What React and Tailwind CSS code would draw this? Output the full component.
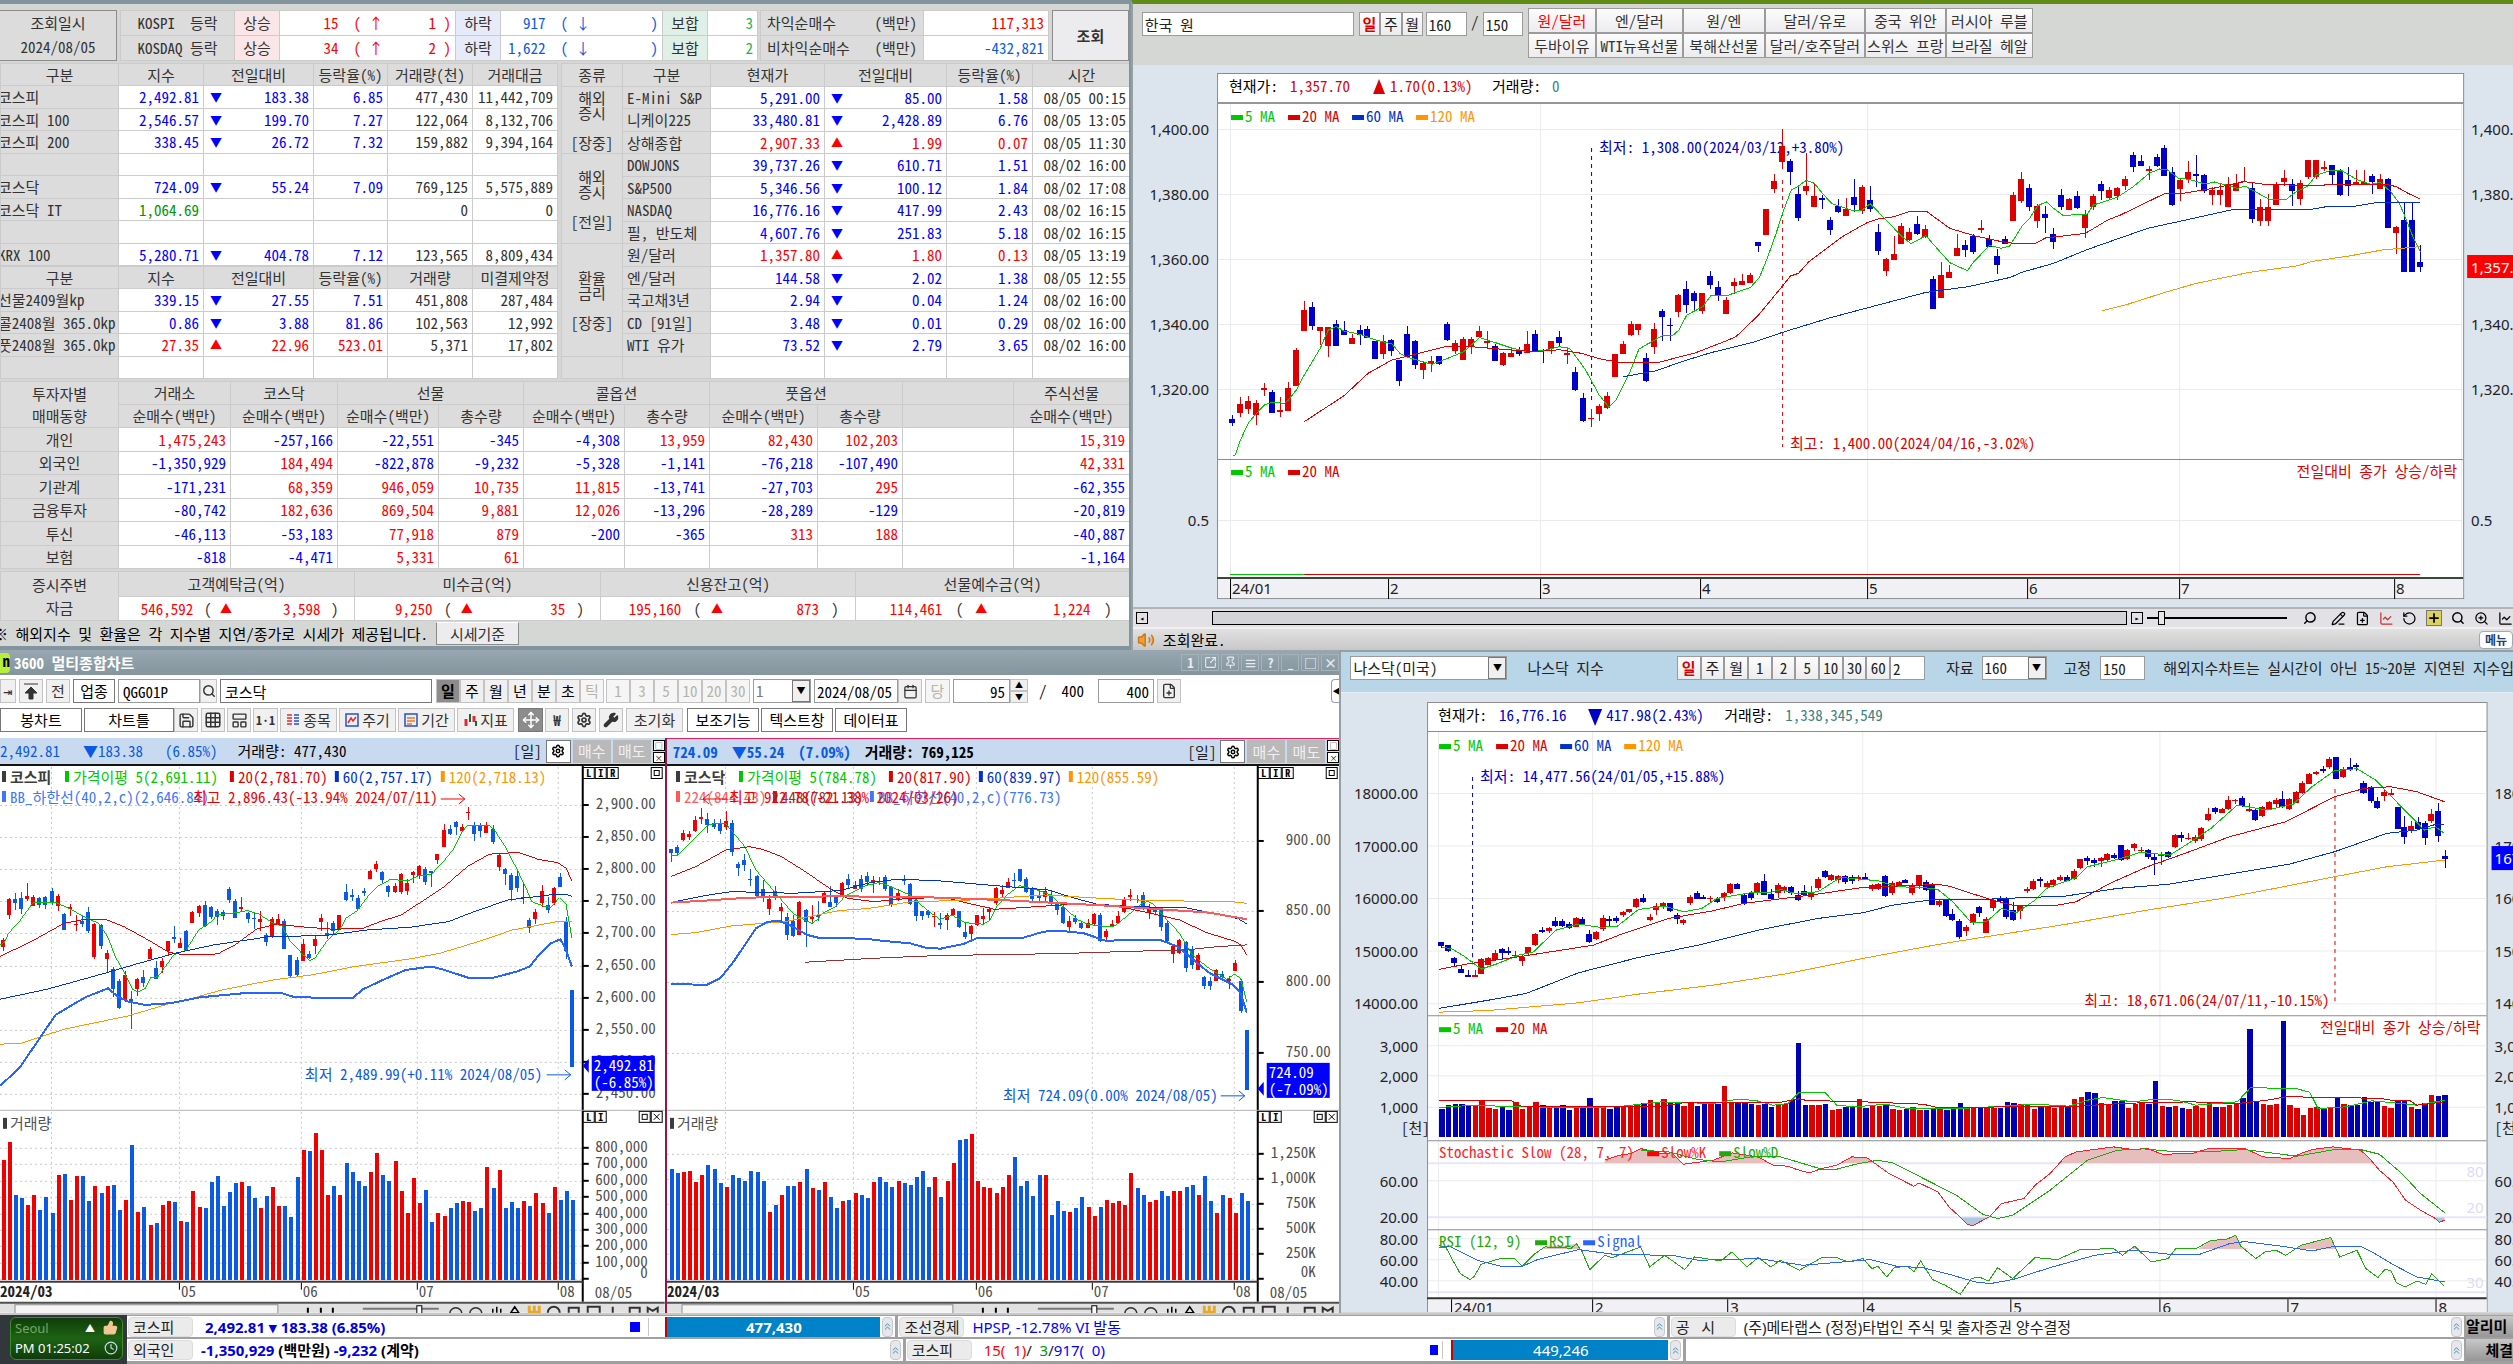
import {
  Search, Settings, Wrench, Move, Save, Grid3x3, LayoutPanelTop, Calendar, Volume2, ThumbsUp, Clock,
  ChevronsUp, FilePlus, PencilLine, RotateCcw, Plus, ChartLine, ZoomIn, Pin, SquareArrowOutUpRight,
} from 'lucide-react';

const RED = '#ff0000', BLUE = '#0000ff', GREEN = '#009600';
const MA = { g: '#00c800', r: '#dc0000', b: '#0032c8', o: '#ff9600' };

const indexRows = [
  ['코스피', '2,492.81', '▼', '183.38', '6.85', '477,430', '11,442,709'],
  ['코스피 100', '2,546.57', '▼', '199.70', '7.27', '122,064', '8,132,706'],
  ['코스피 200', '338.45', '▼', '26.72', '7.32', '159,882', '9,394,164'],
  [],
  ['코스닥', '724.09', '▼', '55.24', '7.09', '769,125', '5,575,889'],
  ['코스닥 IT', '1,064.69', '', '', '', '0', '0'],
  [],
  ['KRX 100', '5,280.71', '▼', '404.78', '7.12', '123,565', '8,809,434'],
];

const futureRows = [
  ['선물2409월kp', '339.15', '▼', '27.55', '7.51', '451,808', '287,484'],
  ['콜2408월 365.0kp', '0.86', '▼', '3.88', '81.86', '102,563', '12,992'],
  ['풋2408월 365.0kp', '27.35', '▲', '22.96', '523.01', '5,371', '17,802'],
  [],
];

const worldRows = [
  ['E-Mini S&P', '5,291.00', '▼', '85.00', '1.58', '08/05 00:15', '해외\n증시\n\n[장중]', 3],
  ['니케이225', '33,480.81', '▼', '2,428.89', '6.76', '08/05 13:05'],
  ['상해종합', '2,907.33', '▲', '1.99', '0.07', '08/05 11:30'],
  ['DOWJONS', '39,737.26', '▼', '610.71', '1.51', '08/02 16:00', '해외\n증시\n\n[전일]', 4],
  ['S&P500', '5,346.56', '▼', '100.12', '1.84', '08/02 17:08'],
  ['NASDAQ', '16,776.16', '▼', '417.99', '2.43', '08/02 16:15'],
  ['필, 반도체', '4,607.76', '▼', '251.83', '5.18', '08/02 16:15'],
  ['원/달러', '1,357.80', '▲', '1.80', '0.13', '08/05 13:19', '환율\n금리\n\n[장중]', 5],
  ['엔/달러', '144.58', '▼', '2.02', '1.38', '08/05 12:55'],
  ['국고채3년', '2.94', '▼', '0.04', '1.24', '08/02 16:00'],
  ['CD [91일]', '3.48', '▼', '0.01', '0.29', '08/02 16:00'],
  ['WTI 유가', '73.52', '▼', '2.79', '3.65', '08/02 16:00'],
  ['', '', '', '', '', '', ' ', 1],
];

const investorRows = [
  ['개인', '1,475,243', '-257,166', '-22,551', '-345', '-4,308', '13,959', '82,430', '102,203', '', '15,319'],
  ['외국인', '-1,350,929', '184,494', '-822,878', '-9,232', '-5,328', '-1,141', '-76,218', '-107,490', '', '42,331'],
  ['기관계', '-171,231', '68,359', '946,059', '10,735', '11,815', '-13,741', '-27,703', '295', '', '-62,355'],
  ['금융투자', '-80,742', '182,636', '869,504', '9,881', '12,026', '-13,296', '-28,289', '-129', '', '-20,819'],
  ['투신', '-46,113', '-53,183', '77,918', '879', '-200', '-365', '313', '188', '', '-40,887'],
  ['보험', '-818', '-4,471', '5,331', '61', '', '', '', '', '', '-1,164'],
];

const funds = [
  ['고객예탁금(억)', '546,592', '3,598'],
  ['미수금(억)', '9,250', '35'],
  ['신용잔고(억)', '195,160', '873'],
  ['선물예수금(억)', '114,461', '1,224'],
];

// Bars: direction, high, body top, body bottom, low. Heights are in thirds of a pixel.
const wonBars = `B 1245 1257 1268 1277,R 1192 1212 1238 1250,R 1189 1203 1227 1241,R 1200 1208 1244 1274,R 1148 1164 1169 1188,B 1170 1175 1238 1238,R 1190 1231 1236 1251,R 1145 1163 1233 1233,R 1043 1050 1158 1158,R 904 930 993 993,
B 907 922 978 990,R 980 980 993 1035,R 980 982 1038 1072,B 961 971 1038 1038,B 964 990 1004 1006,R 1003 1013 1031 1031,B 976 990 1006 1034,B 979 987 1014 1014,B 1022 1022 1076 1078,R 1006 1022 1061 1076,
B 1017 1020 1052 1068,B 1080 1080 1143 1158,B 979 1001 1070 1070,B 1020 1023 1094 1108,R 1086 1089 1109 1138,R 1068 1084 1091 1117,B 1068 1069 1091 1094,B 967 971 1019 1022,R 1020 1028 1052 1063,R 1012 1018 1079 1079,
R 1010 1018 1040 1061,R 979 993 1011 1011,R 993 1023 1030 1044,B 1031 1039 1083 1083,R 1055 1060 1095 1098,R 1041 1059 1072 1072,B 1042 1053 1061 1068,R 994 1032 1060 1060,B 991 1001 1054 1054,B 1046 1051 1054 1090,
R 1023 1024 1046 1061,B 994 1012 1028 1038,R 1048 1059 1064 1093,B 1100 1117 1170 1172,B 1178 1195 1264 1267,R 1228 1253 1256 1280,R 1212 1218 1241 1263,R 1175 1188 1225 1228,R 1062 1062 1130 1130,R 1024 1032 1061 1061,
R 964 971 1004 1008,R 972 972 989 1006,B 1059 1073 1143 1147,R 968 986 1040 1063,B 926 933 952 1022,B 954 974 978 1022,R 882 885 937 951,B 844 866 914 940,B 872 878 904 929,R 878 878 932 943,
B 814 828 854 868,B 844 862 886 902,R 890 900 941 941,R 834 847 857 882,R 823 844 854 854,R 818 825 848 848,B 727 727 738 756,R 626 626 705 705,R 522 544 566 580,R 386 438 487 508,
B 478 484 517 554,B 562 582 653 662,R 458 558 573 584,R 552 589 622 622,B 585 594 599 626,B 652 659 689 704,B 596 618 635 638,R 594 627 648 648,B 536 591 614 636,R 556 562 632 642,
B 558 601 626 636,B 672 697 753 764,R 775 777 812 829,R 708 762 779 779,R 668 679 731 731,R 684 697 719 724,B 649 671 702 705,R 676 686 710 714,B 828 836 926 926,R 787 825 895 895,
R 796 817 835 835,R 701 743 768 768,B 721 735 749 771,B 702 708 757 761,R 660 683 689 699,B 704 716 741 741,B 747 769 794 821,B 709 716 731 731,R 577 585 663 663,R 517 537 603 609,
B 551 563 621 633,R 611 619 663 685,B 619 641 654 700,B 683 702 727 746,B 567 585 621 629,R 594 597 629 629,B 574 589 625 627,R 630 642 683 715,R 582 589 621 629,B 544 552 573 600,
R 560 570 593 597,R 560 563 587 600,R 529 537 557 570,B 455 466 502 517,B 466 484 497 497,R 499 507 513 539,B 463 470 497 500,B 435 443 528 528,B 500 516 614 617,R 534 540 566 602,
R 484 515 538 549,B 464 521 528 560,B 521 525 573 580,R 560 570 585 614,R 552 570 585 615,R 532 552 622 622,R 521 548 573 573,R 502 544 547 547,B 549 563 656 668,R 596 622 663 677,
R 582 622 663 677,R 547 552 614 614,R 510 533 546 557,B 536 551 573 618,R 540 548 597 614,R 480 480 532 536,R 480 480 532 536,R 484 502 506 514,B 495 496 524 553,B 507 510 585 587,
B 502 540 557 588,R 510 545 551 555,R 510 545 551 555,B 521 528 546 581,R 521 537 566 566,B 535 537 683 683,R 679 681 700 762,B 610 660 817 817,B 606 660 817 817,B 735 785 801 817`;

const wonLines = [
  [MA.g, '0 1367,.3 1367,1 1320,2 1268,3 1240,4 1215,5 1206,6.5 1210,7 1200,8 1170,9 1125,11 1045,12 990,13 980,14 993,16 1003,18 1020,20 1032,21 1060,22 1072,24 1086,25 1093,27 1075,29 1055,31 1013,33 1028,35 1044,37 1055,39 1052,41 1040,42.3 1045,43 1067,44.3 1110,46 1185,47.2 1221,48.1 1200,49.7 1125,51 1047,52 1033,54 1006,55.2 1007,56 990,57 945,59 920,60 887,62.2 886,63 878,65 862,66.1 832,67 780,68.2 700,69 640,70.1 570,71 558,72 541,73 550,74 580,75.2 611,77.9 632,79 630,80 611,82 660,84 710,85.1 731,87 707,88 735,90 788,92.2 812,93 785,95 736,96.4 745,97.5 738,99 680,100 655,101 618,102.1 605,103 625,104.2 646,107.2 643,108 615,110 600,111 592,113 560,115 520,116.3 507,117.3 510,118.7 535,120 538,122 552,123.2 546,126.1 565,127 558,130 597,132.2 598,133.3 578,134.8 560,136 525,138 510,139.2 512,141 538,142.8 553,144 547,145.3 575,146.4 610,147.1 650,148 705,149 755'],
  [MA.r, '9 1265,14 1187,17 1120,20 1080,23 1062,27 1038,30 1040,35 1050,38 1055,41 1049,43.8 1060,46 1076,48.5 1087,53.6 1086,58 1059,62 1022,63.2 1009,66 945,69 858,70 828,71 820,72.3 785,75 737,76.5 710,79.6 668,81 657,83 650,85.1 633,87 633,90 685,93.2 708,96.5 725,98 730,100.7 730,102 714,107 700,109.8 660,111.4 645,114 615,117 580,119.2 580,123 565,127 545,129.2 552,134.8 557,139.2 553,144.8 553,146 560,147.5 580,149 597'],
  [MA.b, '49 1130,53 1113,57 1080,60 1058,65.3 1027,69 997,75 953,79.9 922,87 877,92.3 860,97.6 832,99 817,103 790,107.3 748,114.8 685,119.2 662,125.6 628,134.8 630,137 621,141 618,143.9 606,149 606'],
  [MA.o, '109.1 932,112 915,117 877,120.9 850,127.6 817,133.7 797,135.3 785,140.3 767,144.2 750,149 740'],
];

const kospiBars = `R 893 900 922 932,R 773 777 824 836,B 758 776 789 810,B 756 773 808 822,R 728 768 776 784,R 764 772 798 798,B 770 774 795 804,B 768 770 795 806,B 745 754 789 795,R 762 768 798 813,
B 820 822 869 869,R 792 801 808 828,R 824 851 854 872,B 828 842 853 862,B 802 816 874 880,R 848 852 950 956,B 852 856 918 926,R 930 938 958 998,B 980 986 1048 1072,B 1018 1024 1104 1106,
R 992 1006 1080 1085,B 1054 1076 1090 1166,R 1014 1016 1046 1068,B 990 1010 1030 1040,R 922 927 956 956,B 964 984 1018 1018,R 954 962 982 998,R 902 904 934 946,B 859 892 898 910,R 894 908 923 923,
B 870 872 930 930,R 814 816 848 850,R 794 797 819 832,B 784 795 857 860,B 797 802 831 837,B 806 812 832 856,B 810 815 827 840,B 740 747 780 789,B 778 782 835 835,R 772 800 806 816,
B 816 818 836 848,B 818 834 838 868,R 814 836 846 874,B 880 884 906 918,R 832 838 890 893,R 822 836 853 853,B 836 842 926 926,B 944 946 1008 1012,B 950 960 1006 1008,R 898 912 964 964,
B 932 942 954 958,R 886 898 918 942,R 822 833 845 872,B 846 878 888 898,B 842 848 873 882,R 824 826 868 870,B 732 756 780 782,B 748 766 770 782,B 766 775 806 808,B 743 754 760 768,
R 690 692 716 716,R 664 672 688 696,B 694 696 719 732,B 734 738 756 772,R 728 738 756 758,R 700 702 756 762,R 718 728 753 764,R 692 696 706 728,R 676 677 708 718,B 680 686 726 734,
B 692 694 700 740,R 642 642 660 672,R 552 570 622 622,B 556 566 582 586,B 544 546 560 586,R 552 560 572 576,R 500 516 519 540,B 546 556 582 602,B 550 558 572 592,R 546 558 578 578,
B 556 568 606 612,R 643 644 682 692,B 684 686 702 734,B 700 704 751 782,B 694 708 744 756,R 732 770 774 792,B 834 840 864 878,R 808 817 838 852,R 734 753 790 800,B 770 795 810 820,
R 742 744 790 795,B 700 712 740 742,B 832 847 932 958,B 1050 1050 1282 1282`;

const kospiLines = [
  [MA.g, '0 915,10 908,20 880,45 845,78 787,130 787,160 805,205 835,230 850,252 890,270 950,292 1000,310 1048,322 1056,340 1046,352 1014,370 1010,407 945,436 930,465 870,495 845,509 824,545 820,580 812,605 822,640 850,660 858,680 905,710 945,725 962,737 955,767 900,796 868,810 835,836 812,866 762,885 738,915 718,955 723,980 708,1010 703,1038 665,1060 630,1080 580,1094 556,1145 556,1160 575,1185 625,1211 690,1230 740,1245 785,1275 800,1290 802,1310 773,1325 792,1339 895'],
  [MA.r, '0 950,80 900,150 850,200 838,250 840,290 860,340 895,395 937,430 945,510 942,550 915,600 868,650 852,700 860,780 868,850 865,890 845,940 825,1040 740,1094 680,1145 643,1170 640,1215 638,1260 658,1305 668,1325 685,1339 722'],
  [MA.b, '0 1078,110 1048,240 1002,320 972,410 940,500 915,580 900,630 890,760 887,860 870,960 862,1050 845,1110 815,1190 780,1300 763,1330 765,1339 770'],
  [MA.o, '0 1213,50 1210,150 1168,300 1128,400 1090,450 1075,520 1050,640 1020,730 1005,830 980,960 957,1030 940,1120 905,1200 870,1300 846,1339 845'],
  ['#2864ff', '0 1338,45 1285,85 1210,130 1125,200 1072,253 1045,275 1070,300 1085,340 1095,400 1090,470 1072,570 1060,660 1060,690 1072,825 1075,850 1048,900 1018,950 990,1010 980,1040 990,1100 1015,1150 1015,1210 995,1240 980,1265 940,1290 910,1312 898,1325 930,1339 980', 2],
];

const kospiVolume = 'R210 R157 B315 B326 R345 R315 B360 B322 B371 R255 B252 R330 R259 B259 B333 R289 B311 R289 B285 B360 R330 B165 R367 B352 R405 B401 R345 R334 B337 R394 B397 R304 R352 B356 B277 B259 B348 B308 B281 R277 B289 B326 R356 B319 R292 R348 B348 B382 B263 R180 B184 R131 R180 R315 B289 R315 B221 B248 B274 B289 R248 R191 B255 B274 R214 R304 R371 R266 R341 B300 B397 R371 R378 B356 B341 R334 R337 B363 B356 R233 B296 R240 B356 B337 B356 R334 B348 R311 R341 B371 R292 B330 B304 B330';

const kosdaqBars = `B 626 628 638 666,B 614 622 638 645,R 570 580 600 603,R 573 582 592 599,R 528 540 574 577,R 503 530 536 553,B 519 536 554 580,B 536 548 560 568,B 536 548 574 583,R 514 543 562 570,
B 540 548 636 648,B 666 671 684 708,B 642 660 674 692,B 686 716 720 738,B 706 709 768 774,B 721 748 774 787,R 766 776 808 825,B 738 752 768 780,R 788 802 813 842,B 820 830 886 900,
B 826 842 887 890,R 784 787 884 886,B 806 811 846 922,R 796 832 836 853,B 782 826 832 844,R 756 758 788 788,B 738 787 800 802,B 764 770 788 800,R 726 729 766 770,B 702 716 736 747,
R 724 736 748 748,B 704 718 748 756,B 696 708 727 737,R 708 719 726 760,B 712 722 726 734,B 706 712 748 753,B 738 741 796 800,R 746 758 778 782,B 706 716 722 735,B 728 731 792 796,
B 776 780 828 842,B 812 814 828 840,B 810 812 824 834,R 816 828 832 860,B 820 850 856 868,R 820 824 840 870,R 804 808 826 826,B 812 814 862 864,B 848 876 892 896,R 856 858 882 898,
R 824 826 854 858,R 804 828 836 852,R 800 806 816 844,R 742 744 788 794,R 736 750 762 770,R 714 726 744 744,B 698 720 724 740,B 686 688 722 726,B 711 716 756 760,B 742 746 776 782,
B 748 766 774 790,R 742 752 772 782,B 750 768 792 796,B 784 786 810 826,B 796 800 850 852,R 828 842 860 876,B 824 834 846 852,B 842 848 864 868,R 836 850 864 864,R 820 822 852 854,
B 820 826 902 906,R 866 872 890 902,R 840 852 860 860,R 814 828 850 850,R 772 778 816 820,R 748 766 770 782,B 766 776 780 790,B 756 764 808 810,R 792 808 820 836,B 800 806 816 824,
B 806 808 860 872,B 842 850 904 906,R 912 918 942 970,R 898 900 940 942,B 902 906 984 996,B 918 926 974 988,R 938 946 990 990,B 1008 1012 1038 1048,B 1010 1024 1038 1050,R 986 990 1024 1024,
B 992 1002 1010 1020,R 1008 1016 1024 1046,R 960 968 994 994,B 1018 1022 1114 1118,B 1170 1170 1350 1350`;

const kosdaqLines = [
  [MA.g, '24 648,40 645,70 605,108 556,120 552,148 552,162 575,190 620,215 690,250 745,272 780,299 822,340 850,352 840,366 818,394 800,415 768,461 737,490 728,504 733,525 745,560 765,600 812,627 838,655 826,683 848,725 853,740 840,755 800,778 765,806 737,850 752,876 765,902 800,930 835,957 853,1000 860,1020 858,1045 830,1080 790,1094 784,1108 795,1130 830,1164 880,1190 940,1225 980,1270 1018,1287 1003,1301 1015,1315 1085'],
  [MA.r, '24 710,80 680,148 630,200 620,230 628,272 650,320 690,380 745,420 775,480 785,560 775,640 773,690 790,750 808,800 804,900 795,985 793,1040 803,1100 820,1164 840,1225 878,1290 905,1301 915,1315 945'],
  [MA.b, '24 788,100 767,160 755,300 760,400 752,470 728,530 718,620 722,760 738,870 750,930 775,980 793,1060 800,1180 804,1240 820,1295 836,1315 852'],
  [MA.o, '24 884,80 878,160 858,280 845,400 812,470 805,560 786,700 780,860 765,900 768,1000 776,1100 782,1280 785,1315 790'],
  ['#ff5a5a', '24 788,90 783,200 773,400 769,600 772,760 780,860 787,1000 797,1120 808,1230 818,1315 838', 2],
  ['#963232', '325 967,480 955,620 947,900 941,1060 934,1180 930,1250 920,1315 915'],
  ['#2864ff', '24 1032,105 1035,135 1015,165 965,215 865,240 846,265 842,290 855,330 885,360 895,460 896,500 903,560 910,600 925,630 926,680 912,710 895,810 895,860 875,900 873,950 880,1000 903,1040 900,1120 900,1160 920,1200 965,1230 998,1285 1035,1301 1060,1315 1118', 2],
];

const kosdaqVolume = 'B237 B251 R248 R244 R277 R255 B225 B237 B281 R292 B255 B266 B274 B244 B248 B274 R367 B345 R315 B289 B289 R277 B237 R296 B300 R277 B322 B356 R334 B330 R311 B315 B326 R277 B263 B277 B292 R274 B281 B285 B263 B244 B292 R262 B322 R274 R221 B150 B146 R131 R274 R292 R296 R311 R292 R255 B202 B289 B274 B319 B255 R255 B375 B334 B363 R367 B356 B322 R352 R378 B352 R330 R341 R334 R345 R251 B296 B315 R337 R330 B304 B319 R304 R304 B292 B285 R315 B259 B334 R371 B315 R326 R371 B311 B334';

const nasdaqBars = `B 907 907 917 923,B 914 916 933 936,B 950 953 968 980,B 975 987 1000 1000,B 990 1004 1012 1012,R 990 1004 1012 1012,R 955 958 1003 1003,R 950 955 974 974,R 930 938 960 960,B 923 927 940 956,
B 922 932 940 945,R 932 944 948 950,R 945 950 963 978,R 920 922 940 945,R 880 882 914 918,B 862 870 877 880,R 860 864 874 878,B 832 844 858 862,B 838 844 858 862,B 846 852 864 866,
R 832 834 862 862,B 832 836 854 856,B 870 882 906 908,R 872 876 898 900,R 826 834 868 872,B 828 838 842 862,B 828 834 842 850,R 812 816 826 830,R 806 808 816 820,R 774 777 802 804,
B 762 775 787 790,R 822 830 840 844,R 788 798 810 824,R 786 790 798 808,B 788 790 812 816,B 820 826 838 852,R 838 840 850 856,R 766 770 790 796,B 754 758 776 776,B 764 772 778 778,
R 768 774 778 786,B 772 778 786 788,R 756 760 770 784,R 728 732 760 762,B 730 733 746 748,B 760 764 788 796,B 754 760 774 780,R 726 730 760 764,B 702 724 764 766,B 746 762 776 780,
R 730 734 760 774,R 738 742 752 760,B 738 740 760 764,B 752 764 780 782,B 736 752 764 768,R 738 756 772 780,R 712 716 744 750,B 690 694 712 714,R 702 706 720 724,R 704 708 720 728,
B 704 708 726 732,B 706 710 722 732,R 706 712 716 724,B 698 712 716 718,R 732 736 746 754,R 730 732 746 750,B 704 708 768 770,R 724 730 760 764,R 722 726 738 742,B 716 720 728 730,
R 730 736 760 764,R 704 706 734 746,B 720 726 750 752,B 730 732 794 796,R 780 784 796 800,B 778 780 828 830,B 808 822 840 842,B 838 842 890 896,R 854 860 874 888,R 818 822 850 856,
B 798 802 820 830,R 830 838 878 880,R 776 780 804 812,B 768 774 782 790,B 770 776 832 836,B 786 810 840 844,R 796 798 812 836,R 740 748 752 760,R 718 722 748 750,B 712 718 724 740,
R 724 728 740 746,R 716 720 736 740,R 706 712 720 724,B 706 710 722 724,R 688 694 716 720,R 656 658 684 686,B 648 654 664 676,B 654 660 668 680,R 650 654 664 680,R 638 642 660 662,
B 640 644 654 658,B 614 616 660 662,R 626 630 656 660,R 610 612 624 634,R 620 630 634 636,B 628 630 652 658,B 640 650 660 704,R 636 644 648 676,B 632 636 650 654,R 582 585 620 624,
B 576 586 594 606,R 580 594 598 600,R 584 590 604 608,R 562 563 598 602,R 504 522 540 542,B 500 504 516 522,R 504 508 518 520,R 468 480 508 510,R 476 480 484 492,B 468 474 498 502,
R 490 506 514 516,B 504 510 540 542,R 498 502 528 530,R 484 486 506 508,R 474 480 492 500,B 452 478 500 504,R 474 478 506 510,R 454 456 490 490,R 424 428 460 462,R 398 402 432 432,
R 394 396 402 406,B 378 388 394 398,R 352 356 382 386,B 352 352 416 418,R 380 388 412 414,B 354 382 386 394,B 368 376 382 394,B 422 430 460 462,B 438 440 484 490,B 470 484 504 506,
R 448 456 468 482,R 446 460 466 466,B 500 500 566 566,B 528 562 592 612,R 544 558 570 580,B 532 546 568 570,B 544 548 594 614,R 508 522 542 548,B 490 514 588 606,B 630 648 656 684`;

const nasdaqLines = [
  [MA.g, '137 922,150 925,165 945,190 987,210 972,240 945,260 935,290 870,320 852,350 862,372 858,400 808,435 798,460 815,485 805,505 775,550 758,575 758,590 748,610 760,640 755,670 712,720 722,745 740,780 742,800 748,820 785,845 848,865 845,885 805,905 818,930 780,945 745,985 712,1000 680,1045 655,1070 637,1110 645,1135 610,1165 565,1200 495,1240 510,1275 492,1300 440,1330 392,1360 386,1385 420,1415 490,1450 570,1465 560,1477 580'],
  [MA.r, '133 988,170 972,240 950,340 915,380 880,440 835,500 812,540 790,630 765,700 742,800 733,815 738,870 778,900 795,960 795,985 785,1030 730,1080 680,1130 640,1190 590,1265 545,1330 470,1370 445,1405 440,1440 455,1477 485'],
  [MA.b, '133 1105,200 1080,250 1060,320 998,400 952,480 915,560 870,640 835,700 818,740 795,795 778,860 778,900 774,970 768,1040 745,1110 732,1190 702,1270 672,1330 635,1400 580,1440 570,1465 553,1477 553'],
  [MA.o, '133 1116,200 1111,320 1088,400 1062,500 1035,600 1000,700 955,800 913,870 888,970 853,1080 810,1180 775,1250 745,1330 710,1400 680,1477 660'],
];

const nasdaqVolume = [295, 285, 282, 282, 288, 288, 272, 294, 296, 290, 300, 275, 296, 288, 275, 285, 290, 290, 285, 300, 290, 292, 262, 290, 290, 296, 288, 290, 285, 282, 278, 270, 278, 266, 276, 276, 288, 274, 286, 282, 280, 280, 228, 276, 274, 274, 282, 284, 280, 290, 282, 280, 268, 97, 285, 285, 285, 280, 300, 296, 290, 290, 266, 292, 288, 288, 282, 296, 300, 296, 290, 298, 298, 292, 292, 298, 292, 278, 290, 290, 290, 292, 294, 294, 274, 278, 282, 282, 296, 288, 290, 292, 290, 288, 266, 260, 244, 248, 278, 282, 272, 272, 292, 280, 274, 282, 213, 286, 290, 286, 292, 296, 288, 292, 275, 290, 290, 284, 278, 262, 56, 272, 280, 285, 282, 34, 285, 294, 315, 294, 290, 296, 292, 264, 280, 284, 284, 260, 276, 276, 286, 294, 272, 272, 290, 297, 278, 255, 258, 255];

const nasdaqSubLines = [
  [MA.g, '133 292,180 285,215 288,260 290,300 292,370 290,430 275,500 280,530 268,555 270,580 285,600 280,615 246,650 248,665 285,690 290,730 282,760 295,820 296,870 290,930 282,975 288,1000 270,1020 262,1060 275,1090 267,1120 270,1145 285,1200 275,1218 232,1280 236,1297 246,1308 295,1345 290,1380 272,1420 280,1440 285,1477 270'],
  [MA.r, '133 271,230 271,245 290,430 288,460 278,590 276,615 266,625 271,690 274,780 282,800 292,990 288,1020 283,1080 277,1140 275,1200 280,1240 270,1270 258,1300 262,1390 264,1405 270,1430 270,1440 285,1477 275'],
  ['#ff1e28', '355 450,375 435,390 430,403 415,430 430,445 428,460 462,500 450,525 428,560 440,580 465,600 468,612 478,628 488,645 475,665 465,685 440,705 442,735 490,768 528,775 518,800 545,815 590,832 625,840 643,847 646,870 618,885 580,915 565,930 525,950 490,970 440,985 425,1035 410,1060 418,1080 415,1100 432,1140 430,1160 416,1210 415,1235 440,1270 445,1285 430,1300 418,1328 410,1365 420,1375 440,1390 480,1408 515,1425 570,1445 600,1465 625,1470 636,1477 630'],
  ['#1eaa0a', '403 420,440 425,480 448,510 455,550 440,590 440,620 460,645 477,665 477,690 462,720 450,740 458,790 515,825 555,860 612,880 625,900 615,950 540,1000 450,1040 420,1075 416,1120 425,1160 425,1210 418,1280 438,1330 418,1365 418,1390 432,1420 490,1445 550,1477 607'],
  ['#1eaa0a', '133 710,143 712,152 750,162 790,175 808,180 800,190 762,215 745,235 745,245 768,262 730,275 710,300 712,310 715,317 700,325 725,335 778,355 735,365 742,403 710,415 770,435 735,462 778,475 740,510 752,525 725,545 770,560 742,577 770,590 750,615 780,645 742,665 742,680 755,700 745,712 775,720 768,732 800,742 772,760 768,768 785,777 752,793 808,810 825,830 852,845 805,855 800,868 812,880 772,900 805,930 742,960 748,990 718,1035 715,1047 735,1063 708,1085 755,1108 745,1118 715,1145 715,1165 690,1185 688,1198 675,1205 708,1225 745,1237 725,1252 720,1265 735,1285 705,1325 682,1337 740,1360 720,1372 775,1388 802,1397 778,1405 780,1413 818,1424 830,1440 812,1452 822,1460 790,1477 828'],
  ['#2864ff', '133 707,148 708,185 750,220 770,245 768,265 748,320 718,370 733,445 735,480 750,560 745,620 765,710 748,745 768,780 772,820 795,850 815,870 820,900 808,950 772,1010 735,1060 720,1110 732,1150 732,1190 700,1210 694,1260 708,1300 722,1330 708,1365 708,1380 725,1410 765,1440 800,1477 815'],
];

const nasdaqAreas = [
  ['#e6bebe', '355 458,355 450,375 435,390 430,403 415,430 430,445 428,458 458'],
  ['#e6bebe', '490 458,500 450,525 428,560 440,573 458'],
  ['#e6bebe', '672 458,685 440,705 442,716 458'],
  ['#e6bebe', '964 458,970 440,985 425,1035 410,1060 418,1080 415,1100 432,1140 430,1160 416,1210 415,1235 440,1270 445,1285 430,1300 418,1328 410,1365 420,1375 440,1382 458'],
  ['#afc8e1', '831 622,840 643,847 646,868 622'],
  ['#afc8e1', '1462 622,1470 636,1477 630,1477 622'],
  ['#e6bebe', '270 716,278 706,300 708,317 700,322 716'],
  ['#e6bebe', '1056 716,1063 708,1070 716'],
  ['#e6bebe', '1148 716,1165 690,1185 688,1198 675,1205 708,1215 716'],
  ['#e6bebe', '1279 716,1285 705,1325 682,1332 716'],
];

const toPoints = (s, x0, dx, y0) => s.split(',').map(p => { const [x, y] = p.split(' '); return `${x0 + x * dx},${y0 + y / 3}`; }).join(' ');

function Candles({ data, x0, step, y0, up = '#dc0000', down = '#0000c8', w = 6 }) {
  return (
    <g shapeRendering="crispEdges">
      {data.split(',').map((row, i) => {
        const [c, ...v] = row.trim().split(' ');
        const [h, t, b, l] = v.map(n => y0 + n / 3);
        const x = Math.round(x0 + i * step);
        return (
          <g key={i} fill={c === 'R' ? up : down}>
            <rect x={x} y={h} width="1" height={Math.max(l - h, 1)} />
            <rect x={x - w / 2} y={t} width={w} height={Math.max(b - t, 1)} />
          </g>
        );
      })}
    </g>
  );
}

function Lines({ data, x0, dx, y0 }) {
  return data.map(([color, pts, w = 1], i) => <polyline key={i} points={toPoints(pts, x0, dx, y0)} fill="none" stroke={color} strokeWidth={w} shapeRendering="crispEdges" />);
}

function T({ x, y, fill = '#222', end, bold, axis, children }) {
  return (
    <text x={x} y={y} fill={fill} fontSize="15" textAnchor={end ? 'end' : 'start'} fontWeight={bold ? 700 : 400}
      className={axis ? "whitespace-pre font-['Noto_Sans','Noto_Sans_CJK_KR',sans-serif]" : 'whitespace-pre'}>{children}</text>
  );
}

const Rule = ({ x1, y1, x2, y2, c = '#ebebeb', w = 1, dash }) => <line x1={x1} y1={y1} x2={x2} y2={y2} stroke={c} strokeWidth={w} strokeDasharray={dash} />;

function MaLegend({ x, y, count = 4 }) {
  const items = [['5 MA', MA.g, 0], ['20 MA', MA.r, 57], ['60 MA', MA.b, 121], ['120 MA', MA.o, 185]];
  return items.slice(0, count).map(([label, color, dx]) => (
    <g key={label}>
      <rect x={x + dx} y={y - 2} width="12" height="5" fill={color} />
      <T x={x + dx + 14} y={y + 5} fill={color}>{label}</T>
    </g>
  ));
}

function WonChart() {
  const months = [['24/01', 1230], ['2', 1388], ['3', 1540], ['4', 1700], ['5', 1867], ['6', 2027], ['7', 2179], ['8', 2394]];
  return (
    <svg viewBox="1133 65 1380 542" className="w-full h-auto block bg-[#dce4ee]" role="img" aria-label="원/달러 일봉 차트">
      <rect x="1217.5" y="73.5" width="1246" height="525" fill="#fff" stroke="#8c8c8c" />
      <rect x="1218" y="578" width="1245" height="20" fill="#f0f0f5" />
      {[1230.5, 1540.5, 1867.5, 2179.5, 2461.5].map(x => <Rule key={x} x1={x} x2={x} y1={103} y2={577} />)}
      {['1,400.00', '1,380.00', '1,360.00', '1,340.00', '1,320.00'].map((p, i) => (
        <g key={p}>
          <Rule x1={1218} x2={2463} y1={129.5 + i * 65} y2={129.5 + i * 65} />
          <T x={1209} y={135 + i * 65} end axis>{p}</T>
          <T x={2471} y={135 + i * 65} axis>{p}</T>
        </g>
      ))}
      <Rule x1={1218} x2={2463} y1={520.5} y2={520.5} />
      <T x={1209} y={526} end axis>0.5</T>
      <T x={2471} y={526} axis>0.5</T>
      <Rule x1={1218} x2={2463} y1={103} y2={103} c="#969696" w={2} />
      <Rule x1={1218} x2={2463} y1={459.5} y2={459.5} c="#8c8c8c" />
      <Rule x1={1217} x2={2463} y1={578} y2={578} c="#3c463c" w={2} />
      <T x={1229} y={92} fill="#000">현재가:</T>
      <T x={1290} y={92} fill="#dc0000">1,357.70</T>
      <path d="M1373 94h12l-6-15z" fill="#dc0000" />
      <T x={1390} y={92} fill="#dc0000">1.70(0.13%)</T>
      <T x={1492} y={92} fill="#000">거래량:</T>
      <T x={1552} y={92} fill="#3c8282">0</T>
      <MaLegend x={1231} y={117} />
      <MaLegend x={1231} y={472} count={2} />
      <T x={2457} y={477} fill="#dc0000" end>전일대비 종가 상승/하락</T>
      <T x={1599} y={153} fill="#0000c8">최저: 1,308.00(2024/03/12,+3.80%)</T>
      <Candles data={wonBars} x0={1232} step={7.97} y0={0} />
      <Rule x1={1591.5} x2={1591.5} y1={148} y2={402} c="#0000c8" dash="4 4" />
      <Rule x1={1782.5} x2={1782.5} y1={180} y2={447} c="#dc0000" dash="4 4" />
      <Lines data={wonLines} x0={1232.5} dx={7.97} y0={0} />
      <T x={1790} y={449} fill="#dc0000">최고: 1,400.00(2024/04/16,-3.02%)</T>
      <Rule x1={1230} x2={1304} y1={574.5} y2={574.5} c={MA.g} />
      <Rule x1={1304} x2={2420} y1={574.5} y2={574.5} c={MA.r} />
      {months.map(([m, x]) => (
        <g key={m}>
          <Rule x1={x + 0.5} x2={x + 0.5} y1={579} y2={599} c="#000" />
          <T x={x + 2} y={594} axis>{m}</T>
        </g>
      ))}
      <rect x="2467" y="255" width="60" height="23" fill="#f00" />
      <T x={2471} y={273} fill="#fff" axis>1,357.70</T>
    </svg>
  );
}

function NasdaqChart() {
  const bars = nasdaqBars.split(',').map(b => b.trim()[0]);
  const months = [['24/01', 1452], ['2', 1593], ['3', 1728], ['4', 1864], ['5', 2011], ['6', 2160], ['7', 2288], ['8', 2436]];
  const left = [['60.00', 1180.5], ['20.00', 1217], ['80.00', 1238.5], ['60.00', 1259.5], ['40.00', 1280.5], ['3,000', 1045.5], ['2,000', 1075.5], ['1,000', 1107]];
  const k = 1 / 1.3367;
  return (
    <svg viewBox="1342 693 1171 619" className="w-full h-auto block bg-[#dce4ee]" role="img" aria-label="나스닥 지수 일봉 차트">
      <rect x="1428.5" y="702.5" width="1059" height="640" fill="#fff" stroke="#8c8c8c" />
      <rect x="1429" y="1299" width="1058" height="20" fill="#f0f0f5" />
      {[1439.5, 1593.5, 1863.5, 2160.5, 2436.5].map(x => <Rule key={x} x1={x} x2={x} y1={732} y2={1298} />)}
      {['18000.00', '17000.00', '16000.00', '15000.00', '14000.00'].map((p, i) => (
        <g key={p}>
          <Rule x1={1429} x2={2487} y1={793.5 + i * 52.5} y2={793.5 + i * 52.5} />
          <T x={1419} y={799 + i * 52.5} end axis>{p}</T>
          <T x={2495} y={799 + i * 52.5} axis>{p}</T>
        </g>
      ))}
      {left.map(([p, y]) => (
        <g key={y}>
          <Rule x1={1429} x2={2487} y1={y} y2={y} />
          <T x={1419} y={y + 6} end axis>{p}</T>
          <T x={2495} y={y + 6} axis>{p}</T>
        </g>
      ))}
      <T x={1402} y={1134}>[천]</T>
      <T x={2495} y={1134}>[천]</T>
      {[[1163, '80', 1177], [1217, '20', 1213], [1292, '30', 1288]].map(([y, n, ty]) => (
        <g key={n}>
          <Rule x1={1429} x2={2487} y1={y} y2={y} c="#e6e6fa" w={2} />
          <T x={2467} y={ty} fill="#dcdcf5" axis>{n}</T>
        </g>
      ))}
      <Rule x1={1429} x2={2487} y1={731.5} y2={731.5} c="#8c8c8c" />
      <Rule x1={1429} x2={2487} y1={1015.5} y2={1015.5} c="#8c8c8c" />
      <Rule x1={1429} x2={2487} y1={1140.5} y2={1140.5} c="#8c8c8c" />
      <Rule x1={1429} x2={2487} y1={1229.5} y2={1229.5} c="#8c8c8c" />
      <Rule x1={1428} x2={2487} y1={1298} y2={1298} c="#323232" w={2} />
      <T x={1439} y={721} fill="#000">현재가:</T>
      <T x={1500} y={721} fill="#0000c8">16,776.16</T>
      <path d="M1589 709h14l-7 17z" fill="#0000c8" />
      <T x={1607} y={721} fill="#0000c8">417.98(2.43%)</T>
      <T x={1725} y={721} fill="#000">거래량:</T>
      <T x={1786} y={721} fill="#3c8282">1,338,345,549</T>
      <MaLegend x={1440} y={746} />
      <MaLegend x={1440} y={1029} count={2} />
      <T x={2481} y={1033} fill="#dc0000" end>전일대비 종가 상승/하락</T>
      <T x={1481} y={782} fill="#0000c8">최저: 14,477.56(24/01/05,+15.88%)</T>
      <T x={2330} y={1006} fill="#dc0000" end>최고: 18,671.06(24/07/11,-10.15%)</T>
      <Rule x1={1473.5} x2={1473.5} y1={777} y2={964} c="#0000c8" dash="4 4" />
      <Rule x1={2335.5} x2={2335.5} y1={789} y2={1004} c="#dc0000" dash="4 4" />
      <Candles data={nasdaqBars} x0={1442} step={6.73} y0={640} />
      <Lines data={nasdaqLines} x0={1340} dx={k} y0={640} />
      <g shapeRendering="crispEdges">
        {nasdaqVolume.map((v, i) => (
          <rect key={i} x={1440 + i * 6.73} y={1010 + v / 3} width="5.5" height={(380 - v) / 3} fill={bars[i] === 'R' && v > 100 ? '#dc0000' : '#0000b4'} />
        ))}
      </g>
      {nasdaqAreas.map(([c, pts], i) => <polygon key={i} points={toPoints(pts, 1340, k, 1010)} fill={c} />)}
      <Lines data={nasdaqSubLines} x0={1340} dx={k} y0={1010} />
      <T x={1440} y={1158} fill="#ff1e28">Stochastic Slow (28, 7, 7)</T>
      <rect x="1648" y="1151" width="12" height="5" fill="#f00" />
      <T x={1662} y={1158} fill="#ff1e28">Slow%K</T>
      <rect x="1720" y="1151" width="12" height="5" fill="#1eaa0a" />
      <T x={1734} y={1158} fill="#1eaa0a">Slow%D</T>
      <T x={1440} y={1247} fill="#1eaa0a">RSI (12, 9)</T>
      <rect x="1536" y="1240" width="12" height="5" fill="#1eaa0a" />
      <T x={1550} y={1247} fill="#1eaa0a">RSI</T>
      <rect x="1584" y="1240" width="12" height="5" fill="#2864ff" />
      <T x={1598} y={1247} fill="#2864ff">Signal</T>
      {months.map(([m, x]) => (
        <g key={m}>
          <Rule x1={x + 0.5} x2={x + 0.5} y1={1299} y2={1312} c="#000" />
          <T x={x + 3} y={1313} axis>{m}</T>
        </g>
      ))}
      <rect x="2492" y="846" width="30" height="24" fill="#00f" />
      <T x={2495} y={864} fill="#fff" axis>16776.16</T>
    </svg>
  );
}

function VolumeBars({ data, x0, step }) {
  return (
    <g shapeRendering="crispEdges">
      {data.split(' ').map((v, i) => (
        <rect key={i} x={Math.round(x0 + i * step) - 1} y={1090 + v.slice(1) / 3} width="4" height={(570 - v.slice(1)) / 3} fill={v[0] === 'R' ? '#f00000' : '#0a5ae6'} />
      ))}
    </g>
  );
}

// Small letter boxes in the corners of a pane
function Boxes({ x, y, labels }) {
  return labels.map((l, i) => (
    <g key={i}>
      <rect x={x + i * 12 + 0.5} y={y + 0.5} width="11" height="11" fill="#fff" stroke="#000" />
      {l === '□' ? <rect x={x + i * 12 + 3.5} y={y + 3.5} width="5" height="5" fill="none" stroke="#000" />
        : l === 'X' ? <path d={`M${x + i * 12 + 3} ${y + 3}l6 6m0-6l-6 6`} stroke="#000" fill="none" />
          : <text x={x + i * 12 + 6} y={y + 10} fontSize="10" fontWeight="700" textAnchor="middle">{l}</text>}
    </g>
  ));
}

function IndexPane({ ox, width, axisX, labelX, scale, vScale, vLabelX, grid, legend, low, tag, bars, first, step, lines, dx, lineX0, volume, children }) {
  const right = ox + width;
  return (
    <svg viewBox={`${ox} 766 ${width} 547`} className="w-full h-auto block bg-white">
      {grid.map(([x]) => <Rule key={x} x1={x + 0.5} x2={x + 0.5} y1={767} y2={1281} c="#c8c8c8" dash="2 3" />)}
      {scale.map(([p, y]) => (
        <g key={p}>
          <Rule x1={ox} x2={axisX} y1={y + 0.5} y2={y + 0.5} c="#c8c8c8" dash="2 3" />
          <Rule x1={axisX} x2={axisX + 6} y1={y} y2={y} c="#000" w={2} />
          <T x={labelX} y={y + 4} fill="#505050" end>{p}</T>
        </g>
      ))}
      {vScale.map(([p, y, ty]) => (
        <g key={p}>
          <Rule x1={ox} x2={axisX} y1={y + 0.5} y2={y + 0.5} c="#c8c8c8" dash="2 3" />
          <Rule x1={axisX} x2={axisX + 6} y1={y} y2={y} c="#000" w={2} />
          <T x={vLabelX} y={(ty || y) + 4} fill="#505050" end>{p}</T>
        </g>
      ))}
      <Rule x1={axisX} x2={axisX} y1={766} y2={1302} c="#000" w={2} />
      <Rule x1={ox} x2={right} y1={1110.5} y2={1110.5} c="#b4b4b4" />
      {legend.map(([label, color, x, y]) => (
        <g key={label}>
          <rect x={x} y={y - 12} width="4" height="11" fill={color} />
          <T x={x + 8} y={y} fill={color} bold={color === '#3c3c3c'}>{label}</T>
        </g>
      ))}
      {children}
      <Candles data={bars} x0={first} step={step} y0={640} up="#f00000" down="#0a5ae6" w={4} />
      <Lines data={lines} x0={lineX0} dx={dx} y0={640} />
      <T x={low[1]} y={low[2]} fill="#0a5ae6">{low[0]}</T>
      <path d={`M${low[3]} ${low[2] - 5}h24m-6-5l6 5l-6 5`} stroke="#0a5ae6" fill="none" />
      <rect x={tag.x} y={tag.y} width="63" height="35" fill="#00f" />
      <path d={`M${axisX} ${tag.arrow}l6-7v14z`} fill="#00f" />
      <T x={tag.x + 2} y={tag.y + 15} fill="#fff">{tag.price}</T>
      <T x={tag.x + 2} y={tag.y + 32} fill="#fff">{tag.rate}</T>
      <Boxes x={axisX} y={767} labels={['L', 'I', 'R']} />
      <Boxes x={right - 14} y={767} labels={['□']} />
      <Boxes x={axisX} y={1111} labels={['L', 'I']} />
      <Boxes x={right - 26} y={1111} labels={['□', 'X']} />
      <rect x={ox + 3} y={1118} width="4" height="11" fill="#3c3c3c" />
      <T x={ox + 10} y={1129} fill="#505050">거래량</T>
      <VolumeBars data={volume} x0={first} step={step} />
      <Rule x1={ox} x2={axisX} y1={1282} y2={1282} c="#3c3c3c" w={2} />
      <T x={ox} y={1297} bold>2024/03</T>
      {grid.slice(1).map(([x, m]) => (
        <g key={x}>
          <Rule x1={x + 0.5} x2={x + 0.5} y1={1283} y2={1290} c="#000" />
          <T x={x + 2} y={1297} fill="#505050">{m}</T>
        </g>
      ))}
      <T x={axisX + 12} y={1298} fill="#505050">08/05</T>
      <rect x={ox} y="1303" width={width} height="10" fill="#e1e1e1" />
      <Rule x1={ox} x2={right} y1={1303} y2={1303} c="#505050" w={2} />
      <rect x={ox + 15} y="1305" width={axisX - ox - 320} height="9" fill="#f5f5f5" stroke="#8c8c8c" />
      <path d={`M${axisX - 275} 1313v-5M${axisX - 262} 1313v-5M${axisX - 250} 1313v-5`} stroke="#000" strokeWidth="2" />
      <path d={`M${axisX - 220} 1309h76`} stroke="#787878" strokeWidth="2" />
      <rect x={axisX - 166} y="1306" width="5" height="8" fill="#fff" stroke="#000" />
      {[0, 20].map(d => <circle key={d} cx={axisX - 127 + d} cy="1314" r="6" fill="none" stroke="#323232" strokeWidth="1.5" />)}
      <path d={`M${axisX - 86} 1313v-6m-4 6v-4m8 4v-4M${axisX - 68} 1307l-4 6h8z`} stroke="#000" fill="none" strokeWidth="1.5" />
      <path d={`M${axisX - 55} 1306h3v5h2v-5h3v5h2v-5h3v8h-13z`} fill="#e6aa28" />
      <path d={`M${axisX - 35} 1313a6 6 0 0112 0M${axisX - 14} 1313v-5h10v5M${axisX + 5} 1313v-6h12v6M${axisX + 30} 1313v-6M${axisX + 47} 1313v-5h10v5M${axisX + 65} 1313v-5l5 3l5-3v5`} stroke="#323232" fill="none" strokeWidth="2" />
    </svg>
  );
}

const cell = 'border border-[#cbcbcb] px-1 py-0 whitespace-pre overflow-hidden';
const head = cell + ' bg-[#dcdcdc] font-normal text-center';
const frame = 'table-fixed w-full border-collapse border border-[#8c8c8c] bg-white leading-[18px]';

const dirColor = d => (d === '▲' ? RED : d === '▼' ? BLUE : GREEN);

function Change({ dir, value }) {
  return <div className="flex justify-between"><span className="text-[12px] pl-[2px]">{dir}</span><span>{value}</span></div>;
}

function QuoteTable({ heads, rows }) {
  return (
    <table className={frame}>
      <colgroup><col className="w-[118px]" /><col className="w-[85px]" /><col className="w-[110px]" /><col className="w-[74px]" /><col className="w-[85px]" /><col className="w-[85px]" /></colgroup>
      <thead><tr className="h-[22px]">{heads.map(h => <th key={h} className={head + ' px-0'}>{h}</th>)}</tr></thead>
      <tbody>
        {rows.map(([name, price, dir, diff, rate, vol, amount], i) => (
          <tr key={i} className="text-right odd:h-[23px] even:h-[22px]">
            <th className={cell + ' bg-[#dcdcdc] font-normal text-left px-0 -indent-[7px]'}>{name}</th>
            <td className={cell} style={{ color: dirColor(dir) }}>{price}</td>
            <td className={cell} style={{ color: dirColor(dir) }}><Change dir={dir} value={diff} /></td>
            <td className={cell} style={{ color: dirColor(dir) }}>{rate}</td>
            <td className={cell}>{vol}</td>
            <td className={cell}>{amount}</td>
          </tr>
        ))}
      </tbody>
    </table>
  );
}

function WorldTable() {
  return (
    <table className={frame}>
      <colgroup><col className="w-[61px]" /><col className="w-[88px]" /><col className="w-[114px]" /><col className="w-[122px]" /><col className="w-[86px]" /><col className="w-[98px]" /></colgroup>
      <thead><tr className="h-[23px]">{['종류', '구분', '현재가', '전일대비', '등락율(%)', '시간'].map(h => <th key={h} className={head}>{h}</th>)}</tr></thead>
      <tbody>
        {worldRows.map(([name, price, dir, diff, rate, time, group, span], i) => (
          <tr key={i} className="text-right odd:h-[22px] even:h-[23px]">
            {span && <th rowSpan={span} className="border border-[#cbcbcb] bg-[#dcdcdc] p-0 font-normal text-center leading-[15px] whitespace-pre-line">{group}</th>}
            <th className={cell + ' bg-[#dcdcdc] font-normal text-left'}>{name}</th>
            <td className={cell} style={{ color: dirColor(dir) }}>{price}</td>
            <td className={cell} style={{ color: dirColor(dir) }}><Change dir={dir} value={diff} /></td>
            <td className={cell} style={{ color: dirColor(dir) }}>{rate}</td>
            <td className={cell}>{time}</td>
          </tr>
        ))}
      </tbody>
    </table>
  );
}

function InvestorTable() {
  return (
    <table className={frame}>
      <colgroup>
        <col className="w-[118px]" /><col className="w-[112px]" /><col className="w-[107px]" /><col className="w-[101px]" /><col className="w-[85px]" /><col className="w-[101px]" />
        <col className="w-[85px]" /><col className="w-[108px]" /><col className="w-[85px]" /><col className="w-[111px]" /><col className="w-[116px]" />
      </colgroup>
      <thead>
        <tr className="h-[23px]">
          <th rowSpan={2} className={head + ' leading-[22px]'}>{'투자자별\n매매동향'}</th>
          <th className={head}>거래소</th><th className={head}>코스닥</th><th colSpan={2} className={head}>선물</th>
          <th colSpan={2} className={head}>콜옵션</th><th colSpan={2} className={head}>풋옵션</th><th className={head} /><th className={head}>주식선물</th>
        </tr>
        <tr className="h-[23px]">
          {['순매수(백만)', '순매수(백만)', '순매수(백만)', '총수량', '순매수(백만)', '총수량', '순매수(백만)', '총수량', '', '순매수(백만)'].map((h, i) => <th key={i} className={head + ' px-0'}>{h}</th>)}
        </tr>
      </thead>
      <tbody>
        {investorRows.map(([name, ...vals]) => (
          <tr key={name} className="text-right odd:h-[24px] even:h-[23px]">
            <th className={head}>{name}</th>
            {vals.map((v, i) => <td key={i} className={cell} style={{ color: v[0] === '-' ? BLUE : RED }}>{v}</td>)}
          </tr>
        ))}
      </tbody>
    </table>
  );
}

function BreadthTable() {
  const rows = [['KOSPI  등락', '15  ( ↑      1 )', '917  ( ↓        )', '3'], ['KOSDAQ 등락', '34  ( ↑      2 )', '1,622  ( ↓        )', '2']];
  return (
    <table className={frame}>
      <colgroup><col className="w-[114px]" /><col className="w-[45px]" /><col className="w-[176px]" /><col className="w-[45px]" /><col className="w-[162px]" /><col className="w-[45px]" /><col className="w-[50px]" /></colgroup>
      <tbody>
        {rows.map(([name, up, down, flat]) => (
          <tr key={name} className="text-right h-[25px]">
            <th className={head + ' px-0'}>{name}</th>
            <th className={cell + ' bg-[#fae6e6] font-normal text-center'}>상승</th><td className={cell + ' text-[#ff0000]'}>{up}</td>
            <th className={cell + ' bg-[#e6ebfa] font-normal text-center'}>하락</th><td className={cell + ' text-[#0a5ae6]'}>{down}</td>
            <th className={cell + ' bg-[#e1f0e6] font-normal text-center'}>보합</th><td className={cell + ' text-[#1eb450]'}>{flat}</td>
          </tr>
        ))}
      </tbody>
    </table>
  );
}

function MarketWindow() {
  return (
    <section className="w-[45%] shrink-0 flex flex-col bg-[#d5d7d4] border-t-4 border-r-2 border-b-4 border-[#82949e] text-[#333] overflow-hidden">
      <div className="flex gap-[3px] mt-[6px]">
        <div className="w-[117px] bg-[#dcdcdc] border border-[#8c8c8c] border-l-0 text-center leading-[24px]">조회일시<br />2024/08/05</div>
        <div className="w-[637px]"><BreadthTable /></div>
        <div className="w-[289px]">
          <table className={frame}>
            <colgroup><col className="w-[163px]" /><col className="w-[125px]" /></colgroup>
            <tbody>
              <tr className="h-[25px]"><th className={head + ' px-[6px]'}><span className="flex justify-between"><span>차익순매수</span><span>(백만)</span></span></th><td className={cell + ' text-right text-[#ff0000]'}>117,313</td></tr>
              <tr className="h-[25px]"><th className={head + ' px-[6px]'}><span className="flex justify-between"><span>비차익순매수</span><span>(백만)</span></span></th><td className={cell + ' text-right text-[#0a5ae6]'}>-432,821</td></tr>
            </tbody>
          </table>
        </div>
        <button className="flex-1 bg-[#ececee] border border-[#8c8c8c] font-bold">조회</button>
      </div>
      <div className="flex gap-[3px] mt-[2px]">
        <div className="flex-[557] flex flex-col justify-between">
          <QuoteTable heads={['구분', '지수', '전일대비', '등락율(%)', '거래량(천)', '거래대금']} rows={indexRows} />
          <QuoteTable heads={['구분', '지수', '전일대비', '등락율(%)', '거래량', '미결제약정']} rows={futureRows} />
        </div>
        <div className="flex-[569]"><WorldTable /></div>
      </div>
      <div className="mt-[2px]"><InvestorTable /></div>
      <table className={`${frame} mt-[2px]`}>
        <colgroup><col className="w-[118px]" /><col className="w-[236px]" /><col className="w-[246px]" /><col className="w-[255px]" /><col className="w-[274px]" /></colgroup>
        <tbody>
          <tr className="h-[25px]">
            <th rowSpan={2} className={head + ' leading-[23px]'}>{'증시주변\n자금'}</th>
            {funds.map(([name]) => <th key={name} className={head}>{name}</th>)}
          </tr>
          <tr className="h-[24px]">
            {funds.map(([name, total, diff]) => (
              <td key={name} className={cell + ' px-0'}>
                <div className="grid grid-cols-[31%_8%_9%_39%_8%] text-right text-[#ff0000]">
                  <span>{total}</span><span className="text-[#333]">(</span><span className="text-[12px]">▲</span><span>{diff}</span><span className="text-[#333]">)</span>
                </div>
              </td>
            ))}
          </tr>
        </tbody>
      </table>
      <div className="flex-1 flex items-center gap-2 text-black whitespace-nowrap">
        <span className="-indent-[7px]">※ 해외지수 및 환율은 각 지수별 지연/종가로 시세가 제공됩니다.</span>
        <button className="h-[23px] w-[83px] bg-[#ececee] border border-[#8c8c8c] border-t-white text-[#333]">시세기준</button>
      </div>
    </section>
  );
}

const pushBtn = 'h-[24px] bg-linear-to-b from-[#fcfcfd] to-[#ececee] border border-[#9b9b9b] text-center whitespace-nowrap overflow-hidden';
const field = 'h-[24px] bg-white border border-[#9b9b9b] px-[2px] outline-none';

function Dropdown({ id, label, value, className }) {
  return (
    <div className={`relative h-[24px] ${className}`}>
      <select id={id} aria-label={label} className="w-full h-full appearance-none bg-white border border-[#9b9b9b] px-[2px] outline-none"><option>{value}</option></select>
      <span className="absolute right-px top-px bottom-px w-[18px] bg-[#f0f0f0] border border-[#787878] text-[9px] leading-[20px] text-black text-center pointer-events-none">▼</span>
    </div>
  );
}

function PeriodButtons({ items }) {
  return items.map((p, i) => (
    <button key={p} className={`${pushBtn} w-[22px] flex-auto ${i === 0 ? 'font-bold text-[#dc0000]' : 'text-[#222]'}`}>{p}</button>
  ));
}

function WonWindow() {
  const pairs = ['원/달러', '엔/달러', '원/엔', '달러/유로', '중국 위안', '러시아 루블', '두바이유', 'WTI뉴욕선물', '북해산선물', '달러/호주달러', '스위스 프랑', '브라질 헤알'];
  return (
    <section className="flex-1 min-w-0 flex flex-col border-l-2 border-[#96a0a0] border-t-4 border-t-[#5f8c14] bg-[#d5d7d4] overflow-hidden">
      <div className="h-[61px] flex items-start pl-[9px] pt-2 text-[#222] shrink-0">
        <input aria-label="통화" defaultValue="한국 원" className={field + ' w-[212px]'} />
        <div className="flex w-[64px] ml-[5px]"><PeriodButtons items={['일', '주', '월']} /></div>
        <input aria-label="조회 개수" defaultValue="160" className={field + ' w-[41px] ml-[3px]'} />
        <span className="w-4 text-center">/</span>
        <input aria-label="표시 개수" defaultValue="150" className={field + ' w-[40px]'} />
        <div className="grid grid-cols-[68px_87px_82px_100px_81px_87px] -mt-1 ml-[5px]">
          {pairs.map((p, i) => (
            <button key={p} className={`${pushBtn} h-[25px] ${i === 0 ? 'text-[#ff0000] from-[#dcdcdc] to-[#dcdcdc]' : 'text-[#333]'}`}>{p}</button>
          ))}
        </div>
      </div>
      <WonChart />
      <div className="h-[20px] flex items-center border-t-2 border-[#b4b4b4] bg-[#e1e1e6] gap-1 overflow-hidden shrink-0">
        <button aria-label="이전" className="w-3 h-3 border border-black text-[8px] leading-[8px] ml-[3px]">◂</button>
        <div className="flex-1 pl-[60px]"><div className="h-[14px] border border-black bg-[#d2d4d7]" /></div>
        <button aria-label="다음" className="w-3 h-3 border border-black text-[8px] leading-[8px]">▸</button>
        <input type="range" aria-label="확대" defaultValue="8" className="w-[140px] h-[14px] appearance-none bg-[linear-gradient(#000,#000)] bg-[length:100%_2px] bg-center bg-no-repeat [&::-webkit-slider-thumb]:appearance-none [&::-webkit-slider-thumb]:w-[7px] [&::-webkit-slider-thumb]:h-[14px] [&::-webkit-slider-thumb]:bg-[#e6e6e6] [&::-webkit-slider-thumb]:border [&::-webkit-slider-thumb]:border-black" />
        <div className="flex items-center gap-[9px] pl-3 w-[222px] shrink-0">
          <Search size={14} strokeWidth={2.5} className="-scale-x-100" />
          <PencilLine size={15} className="ml-[5px]" /><FilePlus size={15} /><ChartLine size={15} color="#c83232" /><RotateCcw size={15} />
          <span className="bg-[#dcd25a] border border-[#787878]"><Plus size={14} strokeWidth={3} /></span>
          <Search size={14} strokeWidth={2.5} /><ZoomIn size={15} className="shrink-0" /><ChartLine size={15} className="shrink-0" />
        </div>
      </div>
      <div className="flex-1 min-h-[23px] flex items-center border-t-2 border-[#f0f0f0] bg-linear-to-b from-[#e1e1e1] to-[#c8c8c8] text-black pl-1">
        <Volume2 size={18} color="#d27814" fill="#f0a032" className="mr-2" />조회완료.
        <button className="ml-auto h-[18px] w-[34px] rounded-sm bg-white border border-[#a0aab4] text-[#1e3c78] text-[12px] font-bold leading-[14px] px-1">메뉴</button>
      </div>
    </section>
  );
}

const tool = 'h-[24px] border border-[#c3c3c3] bg-[#f0f0f0] flex items-center justify-center text-[#333] shrink-0 whitespace-nowrap';
const toolDark = 'h-[24px] border border-[#787878] bg-white flex items-center justify-center text-black shrink-0 whitespace-nowrap';

function ChartToolbar() {
  return (
    <>
      <div className="h-[31px] flex items-center bg-white pt-px">
        <button aria-label="끝으로" className={tool + ' w-[16px]'}>⇥</button>
        <button aria-label="위로" className={tool + ' w-[24px] ml-[3px]'}><svg width="16" height="18" viewBox="0 0 16 18"><path d="M1 2h14M8 5l6 6h-4v6H6v-6H2z" fill="#333" stroke="#333" /></svg></button>
        <button className={tool + ' w-[24px] ml-[3px]'}>전</button>
        <button className={toolDark + ' w-[42px] ml-[3px]'}>업종</button>
        <input aria-label="종목코드" defaultValue="QGG01P" className="h-[24px] w-[82px] ml-[3px] border border-[#9b9b9b] px-1 bg-white shrink-0" />
        <button aria-label="검색" className={tool + ' w-[17px]'}><Search size={14} strokeWidth={2.5} /></button>
        <input aria-label="종목명" defaultValue="코스닥" className="h-[24px] w-[212px] ml-[3px] border border-[#787878] px-1 bg-white shrink-0" />
        <div className="flex ml-[4px]">
          {['일', '주', '월', '년', '분', '초', '틱'].map(p => (
            <button key={p} className={`h-[24px] w-[24px] border border-[#c3c3c3] ${p === '일' ? 'bg-[#8c8c8c] font-bold text-black' : p === '틱' ? 'bg-[#f5f5f5] text-[#b4b4aa]' : 'bg-[#f0f0f0] text-black'}`}>{p}</button>
          ))}
        </div>
        <div className="flex ml-[2px]">
          {['1', '3', '5', '10', '20', '30'].map(p => <button key={p} disabled className="h-[24px] w-[24px] border border-[#c3c3c3] bg-[#f5f5f5] text-[#b4b4aa]">{p}</button>)}
        </div>
        <Dropdown label="주기" value="    1" className="w-[58px] ml-[3px] shrink-0 whitespace-pre text-[#787878]" />
        <input aria-label="날짜" defaultValue="2024/08/05" className="h-[24px] w-[84px] ml-[3px] border border-[#9b9b9b] px-[2px] text-black shrink-0" />
        <button aria-label="달력" className={tool + ' w-[24px]'}><Calendar size={15} /></button>
        <button disabled className="h-[24px] w-[25px] ml-[3px] border border-[#c3c3c3] bg-[#f5f5f5] text-[#b4b4aa] shrink-0">당</button>
        <input aria-label="표시 봉수" defaultValue="95" className="h-[24px] w-[57px] ml-[3px] border border-[#9b9b9b] px-1 text-right text-black shrink-0" />
        <div className="flex flex-col w-[18px]">
          <button aria-label="증가" className="h-[12px] border border-[#c3c3c3] bg-[#f0f0f0] text-[8px] leading-[10px]">▲</button>
          <button aria-label="감소" className="h-[12px] border border-[#c3c3c3] bg-[#f0f0f0] text-[8px] leading-[10px]">▼</button>
        </div>
        <span className="w-[56px] whitespace-pre text-right text-black"> /  400</span>
        <input aria-label="전체 봉수" defaultValue="400" className="h-[24px] w-[56px] ml-[14px] border border-[#9b9b9b] px-1 text-right text-black shrink-0" />
        <button aria-label="추가" className={tool + ' w-[24px] ml-[3px]'}><FilePlus size={16} /></button>
        <button aria-label="접기" className="ml-auto w-[8px] h-[24px] border border-r-0 border-[#9b9bb4] rounded-l text-[8px] text-black leading-none">◀</button>
      </div>
      <div className="h-[32px] flex items-start pt-[2px] bg-white">
        <button className={toolDark + ' w-[82px]'}>봉차트</button>
        <button className={toolDark + ' w-[90px] ml-[2px]'}>차트틀</button>
        <button aria-label="저장" className={tool + ' w-[24px]'}><Save size={17} /></button>
        <button aria-label="격자" className={tool + ' w-[24px] ml-[3px]'}><Grid3x3 size={18} /></button>
        <button aria-label="배치" className={tool + ' w-[24px] ml-[2px]'}><LayoutPanelTop size={17} /></button>
        <button className={tool + ' w-[25px] ml-[2px] text-[12px] font-bold'}>1·1</button>
        {[
          ['종목', <path key="a" d="M1 2h5M1 5h5M1 8h5M1 11h5" stroke="#e62832" strokeWidth="1.5" />, <path key="b" d="M8 2h5M8 5h5M8 8h5M8 11h5" stroke="#2850c8" strokeWidth="1.5" />],
          ['주기', <rect key="a" x="1" y="1" width="12" height="12" fill="none" stroke="#2850c8" strokeWidth="1.5" />, <path key="b" d="M3 10l3-5l2 3l3-4" fill="none" stroke="#e62832" strokeWidth="1.5" />],
          ['기간', <rect key="a" x="1" y="1" width="12" height="12" fill="none" stroke="#2850c8" strokeWidth="1.5" />, <path key="b" d="M3 5h8M3 8h8M3 11h5" stroke="#e67832" strokeWidth="1.5" />],
          ['지표', <path key="a" d="M3 6v7M11 3v6" stroke="#e62832" strokeWidth="3" />, <path key="b" d="M7 1v8M13 8v5" stroke="#1e6432" strokeWidth="2" />],
        ].map(([label, a, b]) => (
          <button key={label} className={tool + ' w-[57px] ml-[2px] gap-[3px]'}><svg width="14" height="14" viewBox="0 0 14 14">{a}{b}</svg>{label}</button>
        ))}
        <button aria-label="이동" className="h-[24px] w-[25px] ml-[4px] bg-[#8c8c8c] border border-[#787878] text-white flex items-center justify-center"><Move size={18} /></button>
        <button aria-label="원화" className={tool + ' w-[24px] ml-[2px] font-bold'}>₩</button>
        <button aria-label="설정" className={tool + ' w-[24px] ml-[3px]'}><Settings size={16} strokeWidth={2.5} /></button>
        <button aria-label="도구" className={tool + ' w-[24px] ml-[3px]'}><Wrench size={16} fill="#333" /></button>
        <button className={tool + ' w-[57px] ml-[3px]'}>초기화</button>
        <button className={toolDark + ' w-[72px] ml-[4px]'}>보조기능</button>
        <button className={toolDark + ' w-[72px] ml-[2px]'}>텍스트창</button>
        <button className={toolDark + ' w-[72px] ml-[2px]'}>데이터표</button>
      </div>
    </>
  );
}

function PaneHeader({ price, diff, rate, volume, active }) {
  return (
    <div className={`h-[28px] flex items-center bg-[#c8daf0] border-b-2 border-b-[#141414] text-[#0a5ae6] whitespace-pre ${active ? 'font-bold border-t border-t-[#e61e64] pl-[6px]' : ''}`}>
      <span>{price}</span>
      <span className={active ? 'ml-[14px]' : 'ml-[23px]'}>▼{diff}</span>
      <span className={active ? 'ml-[14px]' : 'ml-[22px]'}>{rate}</span>
      <span className={`text-black ${active ? 'ml-[14px]' : 'ml-[20px]'}`}>거래량: {volume}</span>
      <div className="ml-auto flex items-center gap-[2px] font-normal">
        <span className="text-[#222] mr-[2px]">[일]</span>
        <button aria-label="설정" className="w-[25px] h-[23px] bg-white border border-[#787878] text-black flex items-center justify-center"><Settings size={14} strokeWidth={2.5} /></button>
        <button className="w-[38px] h-[23px] bg-[#b9b9b9] text-[#f0f0f0]">매수</button>
        <button className="w-[38px] h-[23px] bg-[#b9b9b9] text-[#f0f0f0]">매도</button>
        <div className="flex flex-col gap-px text-black text-[8px] leading-[9px]">
          <button aria-label="최대화" className="w-[12px] h-[11px] border border-black bg-white">□</button>
          <button aria-label="닫기" className="w-[12px] h-[11px] border border-black bg-white">×</button>
        </div>
      </div>
    </div>
  );
}

const kospiScale = ['2,900.00', '2,850.00', '2,800.00', '2,750.00', '2,700.00', '2,650.00', '2,600.00', '2,550.00', '2,500.00', '2,450.00'].map((p, i) => [p, Math.round(805 + i * 32.1)]);
const kospiVScale = ['800,000', '700,000', '600,000', '500,000', '400,000', '300,000', '200,000', '100,000'].map((p, i) => [p, Math.round(1148 + i * 16.4)]).concat([['0', 1279, 1274]]);

function ChartWindow() {
  return (
    <section className="w-[53.3%] shrink-0 flex flex-col bg-white overflow-hidden">
      <header className="h-[25px] bg-linear-to-b from-[#98a7b0] to-[#84959f] flex items-center text-white font-bold">
        <span className="w-[10px] h-[20px] rounded-r bg-[#b4f03c] text-black leading-[16px] text-right overflow-hidden">n</span>
        <h1 className="ml-1">3600 멀티종합차트</h1>
        <div className="ml-auto flex gap-[2px] text-[#e6ebf0] text-[13px] leading-none">
          {['1', <SquareArrowOutUpRight key="o" size={13} />, <Pin key="p" size={13} />, '≡', '?', '_', '□', '×'].map((b, i) => (
            <button key={i} aria-label={`창 버튼 ${i + 1}`} className="w-[18px] h-[17px] border border-[#a5b2ba] flex items-center justify-center">{b}</button>
          ))}
        </div>
      </header>
      <ChartToolbar />
      <div className="grid grid-cols-[665fr_675fr]">
        <div className="min-w-0">
          <PaneHeader price="2,492.81" diff="183.38" rate="(6.85%)" volume="477,430" />
          <IndexPane ox={0} width={665} axisX={583} labelX={656} scale={kospiScale} vScale={kospiVScale} vLabelX={648}
            grid={[[51], [179, '05'], [301, '06'], [417, '07'], [558, '08']]}
            legend={[['코스피', '#3c3c3c', 2, 783], ['가격이평 5(2,691.11)', MA.g, 65, 783], ['20(2,781.70)', MA.r, 230, 783], ['60(2,757.17)', MA.b, 335, 783], ['120(2,718.13)', MA.o, 441, 783], ['BB_하한선(40,2,c)(2,646.84)', '#3c78ff', 2, 803]]}
            low={['최저 2,489.99(+0.11% 2024/08/05)', 305, 1080, 547]} tag={{ x: 592, y: 1056, arrow: 1066, price: '2,492.81', rate: '(-6.85%)' }}
            bars={kospiBars} first={2.6} step={6.125} lines={kospiLines} dx={1 / 2.34} lineX0={0} volume={kospiVolume}>
            <T x={193} y={803} fill="#f00000">최고 2,896.43(-13.94% 2024/07/11)</T>
            <path d="M441 799h24m-6-5l6 5l-6 5" stroke="#f00000" fill="none" />
          </IndexPane>
        </div>
        <div className="min-w-0 border-l-2 border-[#961446]">
          <PaneHeader price="724.09" diff="55.24" rate="(7.09%)" volume="769,125" active />
          <IndexPane ox={667} width={673} axisX={1258} labelX={1331} vLabelX={1316}
            scale={[['900.00', 841], ['850.00', 911], ['800.00', 982], ['750.00', 1053]]}
            vScale={[['1,250K', 1154], ['1,000K', 1179], ['750K', 1204], ['500K', 1229], ['250K', 1254], ['0K', 1279, 1273]]}
            grid={[[725], [853, '05'], [976, '06'], [1092, '07'], [1234, '08']]}
            legend={[['코스닥', '#3c3c3c', 676, 783], ['가격이평 5(784.78)', MA.g, 739, 783], ['20(817.90)', MA.r, 889, 783], ['60(839.97)', MA.b, 979, 783], ['120(855.59)', MA.o, 1069, 783], ['224(844.43)', '#ff5a5a', 676, 803], ['448(782.13)', '#963232', 773, 803], ['BB_하한선(40,2,c)(776.73)', '#3c78ff', 870, 803]]}
            low={['최저 724.09(0.00% 2024/08/05)', 1003, 1101, 1221]} tag={{ x: 1267, y: 1063, arrow: 1089, price: '724.09', rate: '(-7.09%)' }}
            bars={kosdaqBars} first={670.7} step={6.13} lines={kosdaqLines} dx={1 / 2.24} lineX0={660} volume={kosdaqVolume}>
            <T x={729} y={803} fill="#f00000">최고 922.78(-21.38% 2024/03/26)</T>
            <path d="M727 799h-24m6-5l-6 5l6 5" stroke="#f00000" fill="none" />
          </IndexPane>
        </div>
      </div>
    </section>
  );
}

function NasdaqWindow() {
  return (
    <section className="flex-1 min-w-0 flex flex-col border-l-2 border-[#96a0a0] overflow-hidden">
      <div className="h-[43px] flex items-start pt-[4px] pl-[9px] bg-[#b9d5e8] border-t-2 border-t-[#96a0a0] border-b border-b-[#e6eef5] text-[#222] whitespace-nowrap shrink-0 [&>*]:shrink-0">
        <Dropdown label="지수" value="나스닥(미국)" className="w-[157px]" />
        <span className="ml-[20px] leading-[24px]">나스닥 지수</span>
        <div className="flex w-[213px] ml-[73px]"><PeriodButtons items={['일', '주', '월', '1', '2', '5', '10', '30', '60']} /></div>
        <input aria-label="분" defaultValue="2" className={field + ' w-[35px]'} />
        <label htmlFor="count" className="ml-[21px] leading-[24px]">자료</label>
        <Dropdown id="count" value="160" className="w-[65px] ml-[8px]" />
        <label htmlFor="fixed" className="ml-[17px] leading-[24px]">고정</label>
        <input id="fixed" defaultValue="150" className={field + ' w-[45px] ml-[9px]'} />
        <span className="ml-[18px] leading-[24px]">해외지수차트는 실시간이 아닌 15~20분 지연된 지수입니다.</span>
      </div>
      <NasdaqChart />
    </section>
  );
}

function Chevron() {
  return <button aria-label="펼치기" className="w-[11px] h-[20px] bg-[#e6e6eb] border border-[#c8c8c8] rounded-sm flex items-center justify-center shrink-0"><ChevronsUp size={11} color="#288cbe" className="shrink-0" /></button>;
}

const tag = 'h-[20px] bg-[#ebebeb] border border-[#dcdcdc] rounded leading-[18px] px-1 shrink-0';

function TickerBar() {
  return (
    <footer className="h-[51px] flex bg-[#a0a0a0] border-t-2 border-[#c8c8c8] text-[15px] text-[#222] font-['Noto_Sans','Noto_Sans_CJK_KR',sans-serif] whitespace-pre overflow-hidden">
      <div className="w-[127px] shrink-0 bg-[#32373c] pl-[10px] pr-1 py-[2px]">
        <div className="h-[43px] rounded-md bg-linear-to-b from-[#0f3c0a] via-[#1e6414] to-[#0f3c0a] border border-[#3c8c28] text-white px-1 text-[13px] leading-[20px]">
          <div className="flex items-center justify-between"><span className="text-[#6eaa64]">Seoul</span><span className="flex items-center gap-2"><span className="text-[10px]">▲</span><ThumbsUp size={15} color="#f0c896" fill="#f0c896" /></span></div>
          <div className="flex items-center justify-between"><span>PM 01:25:02</span><Clock size={14} color="#c8dcf0" /></div>
        </div>
      </div>
      <div className="flex-1 min-w-0 flex flex-col gap-[2px] pt-px pb-[3px]">
        <div className="flex-1 flex gap-[3px]">
          <div className="flex-[769] flex items-center bg-white pl-px pr-[2px]">
            <span className={tag + ' w-[65px]'}>코스피</span>
            <span className="ml-3 font-bold text-[#0000dc]">2,492.81 ▾ 183.38 (6.85%)</span>
            <span className="ml-auto w-[10px] h-[10px] bg-[#0000ff]" /><span className="w-px h-[18px] bg-[#c8c8c8] ml-2 mr-4" />
            <span className="w-[215px] h-[20px] bg-[#0082c8] border-l-2 border-[#c80000] text-white font-bold text-center leading-[20px] mr-[2px]">477,430</span>
            <Chevron />
          </div>
          <div className="flex-[769] flex items-center bg-white pl-px pr-[2px]">
            <span className={tag + ' w-[65px]'}>조선경제</span>
            <span className="ml-2 text-[#0000ff]">HPSP, -12.78% VI 발동</span>
            <span className="ml-auto"><Chevron /></span>
          </div>
          <div className="flex-[795] flex items-center bg-white pl-px pr-[2px]">
            <span className={tag + ' w-[65px]'}>공   시</span>
            <span className="ml-2">(주)메타랩스 (정정)타법인 주식 및 출자증권 양수결정</span>
            <span className="ml-auto"><Chevron /></span>
          </div>
        </div>
        <div className="flex-1 flex gap-[3px]">
          <div className="flex-[776] flex items-center bg-white pl-px pr-[2px]">
            <span className={tag + ' w-[65px]'}>외국인</span>
            <span className="ml-2 font-bold text-[#0000dc]">-1,350,929 <span className="text-black">(백만원)</span> -9,232 <span className="text-black">(계약)</span></span>
            <span className="ml-auto"><Chevron /></span>
          </div>
          <div className="flex-[778] flex items-center bg-white pl-px pr-[2px]">
            <span className={tag + ' w-[65px]'}>코스피</span>
            <span className="ml-3 text-[#ff0000]">15(  1)<span className="text-[#222]">/  </span><span className="text-[#009600]">3</span><span className="text-[#222]">/</span><span className="text-[#0000ff]">917(  0)</span></span>
            <span className="ml-auto w-[8px] h-[10px] bg-[#0000ff]" /><span className="w-px h-[18px] bg-[#c8c8c8] ml-1 mr-2" />
            <span className="w-[217px] h-[20px] bg-[#0082c8] border-l-2 border-[#c80000] text-white text-center leading-[20px] mr-[2px]">449,246</span>
            <Chevron />
          </div>
          <div className="flex-[779] flex items-center bg-white pr-[2px]"><span className="ml-auto"><Chevron /></span></div>
        </div>
      </div>
      <div className="w-[49px] shrink-0 flex flex-col gap-[2px] pt-px pb-[3px] pl-[2px] font-bold text-black">
        <button className="flex-1 bg-linear-to-b from-[#c8c8c8] to-[#969696] text-left leading-none overflow-hidden">알리미</button>
        <button className="flex-1 bg-linear-to-b from-[#c8c8c8] to-[#969696] text-right leading-none overflow-hidden">체결</button>
      </div>
    </footer>
  );
}

export default function App() {
  return (
    <main className="w-full overflow-hidden bg-[#d5d7d4] text-[15px] leading-[20px] font-['Noto_Sans_Mono_CJK_KR','Noto_Sans_CJK_KR',monospace]">
      <div className="flex items-stretch"><MarketWindow /><WonWindow /></div>
      <div className="flex items-stretch"><ChartWindow /><NasdaqWindow /></div>
      <TickerBar />
    </main>
  );
}
